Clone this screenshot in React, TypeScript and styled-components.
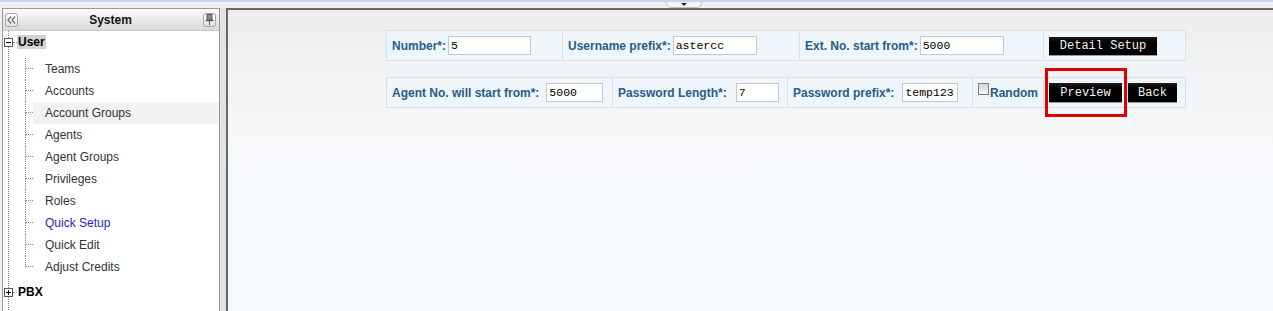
import React from 'react';
import styled, { createGlobalStyle } from 'styled-components';

const GlobalStyle = createGlobalStyle`
  html, body {
    margin: 0;
    padding: 0;
    height: 100%;
    overflow: hidden;
    background: #f0f0f0;
  }
  body {
    font-family: 'Liberation Sans', Arial, sans-serif;
    font-size: 12px;
    color: #333;
  }
  #root {
    height: 100%;
  }
`;

const Page = styled.div`
  display: flex;
  flex-direction: column;
  height: 100%;
`;

const TopStrip = styled.div`
  height: 6px;
  border-top: 2px solid #c6d6ec;
  background: #f0f0f0;
  display: flex;
  padding-left: 666px;
`;

const SlideTab = styled.div`
  width: 34px;
  height: 5px;
  border: 1px solid #c2c2c2;
  border-top: none;
  border-radius: 0 0 5px 5px;
  background: #f6f6f6;
  display: flex;
  justify-content: center;
  align-items: center;
`;

const TabArrow = styled.span`
  width: 0;
  height: 0;
  border-left: 3px solid transparent;
  border-right: 3px solid transparent;
  border-top: 3px solid #222;
`;

const Main = styled.div`
  display: flex;
  flex: 1;
  min-height: 0;
`;

const Sidebar = styled.aside`
  width: 216px;
  margin-left: 2px;
  border: 1px solid #9a9a9a;
  border-bottom: none;
  background: #fff;
  display: flex;
  flex-direction: column;
`;

const SidebarHeader = styled.div`
  height: 21px;
  border-bottom: 1px solid #c8c8c8;
  background: linear-gradient(#fbfbfb, #d9d9d9);
  display: flex;
  align-items: center;
  padding: 0 3px 0 2px;
`;

const HeaderTitle = styled.div`
  flex: 1;
  text-align: center;
  font-weight: bold;
  color: #111;
`;

const HeaderButton = styled.span`
  width: 13px;
  height: 14px;
  box-sizing: border-box;
  border: 1px solid #a6a6a6;
  border-radius: 3px;
  background: linear-gradient(#ffffff, #e2e2e2);
  display: flex;
  align-items: center;
  justify-content: center;
`;

const Tree = styled.div`
  flex: 1;
  background-image: linear-gradient(to bottom, #8a8a8a 1px, transparent 1px);
  background-size: 1px 2px;
  background-repeat: repeat-y;
  background-position: 5px 0;
`;

const RootRow = styled.div`
  height: 22px;
  display: flex;
  align-items: center;
  padding-left: 1px;
`;

const Toggle = styled.span<{ $open: boolean }>`
  width: 9px;
  height: 9px;
  box-sizing: border-box;
  border: 1px solid #555;
  background: #fff;
  display: flex;
  align-items: center;
  justify-content: center;
  position: relative;

  &::before {
    content: '';
    width: 5px;
    height: 1px;
    background: #000;
  }
  &::after {
    content: ${({ $open }) => ($open ? 'none' : "''")};
    position: absolute;
    width: 1px;
    height: 5px;
    background: #000;
  }
`;

const RootStub = styled.span`
  width: 4px;
  border-top: 1px dotted #8a8a8a;
`;

const RootLabel = styled.span<{ $active?: boolean }>`
  font-weight: bold;
  color: #000;
  line-height: 14px;
  padding: 0 1px;
  background: ${({ $active }) => ($active ? '#d3d3d3' : 'transparent')};
`;

const Children = styled.div`
  margin: 5px 0 3px 22px;
`;

const ChildItem = styled.div`
  height: 22px;
  display: flex;
`;

const Connector = styled.span<{ $last: boolean }>`
  width: 8px;
  display: flex;
  flex-direction: column;

  &::before {
    content: '';
    height: 11px;
    box-sizing: border-box;
    border-left: 1px dotted #8a8a8a;
    border-bottom: 1px dotted #8a8a8a;
  }
  &::after {
    content: '';
    flex: 1;
    border-left: ${({ $last }) => ($last ? 'none' : '1px dotted #8a8a8a')};
  }
`;

const ItemLabel = styled.span<{ $hover?: boolean; $current?: boolean }>`
  flex: 1;
  display: flex;
  align-items: center;
  padding-left: 12px;
  background: ${({ $hover }) => ($hover ? '#f2f2f2' : 'transparent')};
  color: ${({ $current }) => ($current ? '#1f1fc4' : '#333')};
`;

const Splitter = styled.div`
  width: 6px;
  background: #e3e3e3;
`;

const Content = styled.main`
  flex: 1;
  border-top: 2px solid #676767;
  border-left: 2px solid #676767;
  background: linear-gradient(#ededed, #f8fbfd 55%);
  padding: 20px 0 0 158px;
`;

const FormRow = styled.div`
  display: flex;
  width: 798px;
  border: 1px solid #d4e1eb;
  background: #eef6fc;

  & + & {
    margin-top: 16px;
  }
`;

const Cell = styled.div<{ $w: number }>`
  width: ${({ $w }) => $w}px;
  height: 29px;
  box-sizing: border-box;
  display: flex;
  align-items: center;
  padding: 0 5px;

  & + & {
    border-left: 1px solid #d4e1eb;
  }
`;

const Label = styled.label<{ $gap: number }>`
  font-weight: bold;
  color: #2b5b86;
  white-space: nowrap;
  margin-right: ${({ $gap }) => $gap}px;
`;

const TextInput = styled.input<{ $w: number }>`
  width: ${({ $w }) => $w}px;
  height: 19px;
  box-sizing: border-box;
  border: 1px solid #c8c8c8;
  background: #fff;
  padding: 0 2px;
  font-family: 'Liberation Mono', 'Courier New', monospace;
  font-size: 11.5px;
  color: #000;
  outline: none;
`;

const CheckBox = styled.span`
  width: 12px;
  height: 12px;
  box-sizing: border-box;
  border: 1px solid #7c7c7c;
  background: linear-gradient(#d4d4d4, #f4f4f4);
  align-self: flex-start;
  margin-top: 5px;
  margin-right: 1px;
`;

const ActionButton = styled.button<{ $w: number; $h: number }>`
  width: ${({ $w }) => $w}px;
  height: ${({ $h }) => $h}px;
  padding: 0;
  border: none;
  background: linear-gradient(#1e1e1e, #000 30%, #000);
  box-shadow: 0 1px 0 #9a9a9a;
  color: #f2f2f2;
  font-family: 'Liberation Mono', 'Courier New', monospace;
  font-size: 12px;
  cursor: pointer;
`;

const ButtonGroup = styled.div`
  display: flex;
  gap: 6px;
`;

const Marked = styled.span`
  position: relative;
  display: flex;

  &::after {
    content: '';
    position: absolute;
    left: -4px;
    right: -5px;
    top: -15px;
    bottom: -15px;
    border: 3px solid #e10000;
    pointer-events: none;
  }
`;

const userItems = [
  'Teams',
  'Accounts',
  'Account Groups',
  'Agents',
  'Agent Groups',
  'Privileges',
  'Roles',
  'Quick Setup',
  'Quick Edit',
  'Adjust Credits',
];

const CollapseIcon = () => (
  <svg width="9" height="8" viewBox="0 0 9 8">
    <polyline points="4,0.5 1,4 4,7.5" fill="none" stroke="#707070" strokeWidth="1.3" />
    <polyline points="8,0.5 5,4 8,7.5" fill="none" stroke="#707070" strokeWidth="1.3" />
  </svg>
);

const PinIcon = () => (
  <svg width="9" height="11" viewBox="0 0 9 11">
    <rect x="2" y="0.5" width="5" height="5.5" fill="#8c8c8c" stroke="#5a5a5a" />
    <rect x="0.5" y="6" width="8" height="1.2" fill="#5a5a5a" />
    <line x1="4.5" y1="7" x2="4.5" y2="11" stroke="#5a5a5a" />
  </svg>
);

const App: React.FC = () => {
  return (
    <>
      <GlobalStyle />
      <Page>
        <TopStrip>
          <SlideTab>
            <TabArrow />
          </SlideTab>
        </TopStrip>
        <Main>
          <Sidebar>
            <SidebarHeader>
              <HeaderButton>
                <CollapseIcon />
              </HeaderButton>
              <HeaderTitle>System</HeaderTitle>
              <HeaderButton>
                <PinIcon />
              </HeaderButton>
            </SidebarHeader>
            <Tree>
              <RootRow>
                <Toggle $open />
                <RootStub />
                <RootLabel $active>User</RootLabel>
              </RootRow>
              <Children>
                {userItems.map((item, index) => (
                  <ChildItem key={item}>
                    <Connector $last={index === userItems.length - 1} />
                    <ItemLabel $hover={item === 'Account Groups'} $current={item === 'Quick Setup'}>
                      {item}
                    </ItemLabel>
                  </ChildItem>
                ))}
              </Children>
              <RootRow>
                <Toggle $open={false} />
                <RootStub />
                <RootLabel>PBX</RootLabel>
              </RootRow>
            </Tree>
          </Sidebar>
          <Splitter />
          <Content>
            <FormRow>
              <Cell $w={175}>
                <Label $gap={2}>Number*:</Label>
                <TextInput $w={83} defaultValue="5" />
              </Cell>
              <Cell $w={237}>
                <Label $gap={2}>Username prefix*:</Label>
                <TextInput $w={84} defaultValue="astercc" />
              </Cell>
              <Cell $w={244}>
                <Label $gap={2}>Ext. No. start from*:</Label>
                <TextInput $w={84} defaultValue="5000" />
              </Cell>
              <Cell $w={142}>
                <ActionButton $w={108} $h={18}>Detail Setup</ActionButton>
              </Cell>
            </FormRow>
            <FormRow>
              <Cell $w={225}>
                <Label $gap={7}>Agent No. will start from*:</Label>
                <TextInput $w={57} defaultValue="5000" />
              </Cell>
              <Cell $w={175}>
                <Label $gap={9}>Password Length*:</Label>
                <TextInput $w={43} defaultValue="7" />
              </Cell>
              <Cell $w={185}>
                <Label $gap={8}>Password prefix*:</Label>
                <TextInput $w={56} defaultValue="temp123" />
              </Cell>
              <Cell $w={71}>
                <CheckBox />
                <Label $gap={0}>Random</Label>
              </Cell>
              <Cell $w={142}>
                <ButtonGroup>
                  <Marked>
                    <ActionButton $w={73} $h={19}>Preview</ActionButton>
                  </Marked>
                  <ActionButton $w={49} $h={19}>Back</ActionButton>
                </ButtonGroup>
              </Cell>
            </FormRow>
          </Content>
        </Main>
      </Page>
    </>
  );
};

export default App;
